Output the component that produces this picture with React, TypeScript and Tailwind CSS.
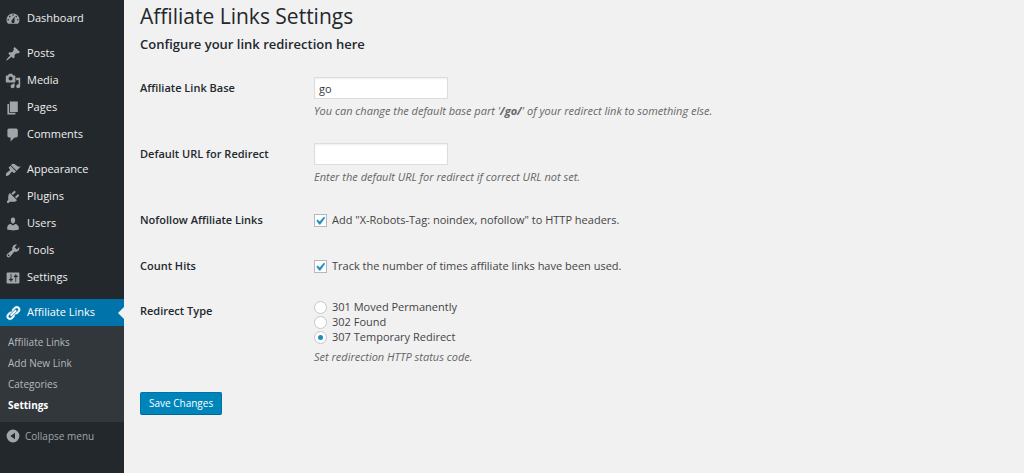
import { useState, type ReactNode } from 'react'
import clsx from 'clsx'

const icons = {
  dashboard: 'M3.76 16h12.48A7.998 7.998 0 0 0 10 3a7.998 7.998 0 0 0-6.24 13zM10 4c.55 0 1 .45 1 1s-.45 1-1 1-1-.45-1-1 .45-1 1-1zM6 6c.55 0 1 .45 1 1s-.45 1-1 1-1-.45-1-1 .45-1 1-1zm8 0c.55 0 1 .45 1 1s-.45 1-1 1-1-.45-1-1 .45-1 1-1zm-5.37 5.55L12 7v6c0 1.1-.9 2-2 2s-2-.9-2-2c0-.57.24-1.08.63-1.45zM4 10c.55 0 1 .45 1 1s-.45 1-1 1-1-.45-1-1 .45-1 1-1zm12 0c.55 0 1 .45 1 1s-.45 1-1 1-1-.45-1-1 .45-1 1-1z',
  post: 'M10.44 3.02l1.82-1.82 6.36 6.35-1.83 1.82c-1.05-.68-2.48-.57-3.41.36l-.75.75c-.92.93-1.04 2.35-.35 3.41l-1.83 1.82-2.41-2.41-2.8 2.79c-.42.42-3.38 2.71-3.8 2.29s1.86-3.39 2.28-3.81l2.79-2.79L4.1 9.36l1.83-1.82c1.05.69 2.48.57 3.4-.36l.75-.75c.93-.92 1.05-2.35.36-3.41z',
  media: 'M13 11V4c0-.55-.45-1-1-1h-1.67L9 1H5L3.67 3H2c-.55 0-1 .45-1 1v7c0 .55.45 1 1 1h10c.55 0 1-.45 1-1zM7 4.5c1.38 0 2.5 1.12 2.5 2.5S8.38 9.5 7 9.5 4.5 8.38 4.5 7 5.62 4.5 7 4.5zM14 6h5v10.5c0 1.38-1.12 2.5-2.5 2.5S14 17.88 14 16.5s1.12-2.5 2.5-2.5c.17 0 .34.02.5.05V9h-3V6zm-4 8.05V13h2v3.5c0 1.38-1.12 2.5-2.5 2.5S7 17.88 7 16.5 8.12 14 9.5 14c.17 0 .34.02.5.05z',
  page: 'M6 15V2h10v13H6zm-1 1h8v2H3V5h2v11z',
  comments: 'M5 2h9c1.1 0 2 .9 2 2v7c0 1.1-.9 2-2 2h-2l-5 5v-5H5c-1.1 0-2-.9-2-2V4c0-1.1.9-2 2-2z',
  appearance: 'M14.48 11.06L7.41 3.99l1.5-1.5c.5-.56 2.3-.47 3.51.32 1.21.8 1.43 1.28 2.91 2.1 1.18.64 2.45 1.26 4.45.85zm-.71.71L6.7 4.7 4.93 6.47c-.39.39-.39 1.02 0 1.41l1.06 1.06c.39.39.39 1.03 0 1.42-.6.6-1.43 1.11-2.21 1.69-.35.26-.7.53-1.01.84C1.43 14.23.4 16.08 1.4 17.07c.99 1 2.84-.03 4.18-1.36.31-.31.58-.66.85-1.02.57-.78 1.08-1.61 1.69-2.21.39-.39 1.02-.39 1.41 0l1.06 1.06c.39.39 1.02.39 1.41 0z',
  plugins: 'M13.11 4.36L9.87 7.6 8 5.73l3.24-3.24c.35-.34 1.05-.2 1.56.32.52.51.66 1.21.31 1.55zm-8 1.77l.91-1.12 9.01 9.01-1.19.84c-.71.71-2.63 1.16-3.82 1.16H6.14L4.9 17.26c-.59.59-1.54.59-2.12 0-.59-.58-.59-1.53 0-2.12l1.24-1.24v-3.88c0-1.13.4-3.19 1.09-3.89zm7.26 3.97l3.24-3.24c.34-.35 1.04-.21 1.55.31.52.51.66 1.21.31 1.55l-3.24 3.25z',
  users: 'M10 9.25c-2.27 0-2.73-3.44-2.73-3.44C7 4.02 7.82 2 9.97 2c2.16 0 2.98 2.02 2.71 3.81 0 0-.41 3.44-2.68 3.44zm0 2.57L12.72 10c2.39 0 4.52 2.33 4.52 4.53v2.49s-3.65 1.13-7.24 1.13c-3.65 0-7.24-1.13-7.24-1.13v-2.49c0-2.25 1.94-4.48 4.47-4.48z',
  tools: 'M16.68 9.77c-1.34 1.34-3.3 1.67-4.95.99l-5.41 6.52c-.99.99-2.59.99-3.58 0s-.99-2.59 0-3.57l6.52-5.42c-.68-1.65-.35-3.61.99-4.95 1.28-1.28 3.12-1.62 4.72-1.06l-2.89 2.89 2.82 2.82 2.86-2.87c.53 1.58.18 3.39-1.08 4.65zM3.81 16.21c.4.39 1.04.39 1.43 0 .4-.4.4-1.04 0-1.43-.39-.4-1.03-.4-1.43 0-.39.39-.39 1.03 0 1.43z',
  settings: 'M18 16V4c0-.55-.45-1-1-1H3c-.55 0-1 .45-1 1v12c0 .55.45 1 1 1h14c.55 0 1-.45 1-1zM8 11h1c.55 0 1 .45 1 1s-.45 1-1 1H8v1.5c0 .28-.22.5-.5.5s-.5-.22-.5-.5V13H6c-.55 0-1-.45-1-1s.45-1 1-1h1V5.5c0-.28.22-.5.5-.5s.5.22.5.5V11zm5-2h-1c-.55 0-1-.45-1-1s.45-1 1-1h1V5.5c0-.28.22-.5.5-.5s.5.22.5.5V7h1c.55 0 1 .45 1 1s-.45 1-1 1h-1v5.5c0 .28-.22.5-.5.5s-.5-.22-.5-.5V9z',
  links: 'M17.74 2.76c1.68 1.69 1.68 4.41 0 6.1l-1.53 1.52c-1.12 1.12-2.7 1.47-4.14 1.09l2.62-2.61.76-.77.76-.76c.84-.84.84-2.2 0-3.04-.84-.85-2.2-.85-3.04 0l-.77.76-3.38 3.38c-.37-1.44-.02-3.02 1.1-4.14l1.52-1.53c1.69-1.68 4.42-1.68 6.1 0zM8.59 13.43l5.34-5.34c.42-.42.42-1.1 0-1.52-.44-.43-1.13-.39-1.53 0l-5.33 5.34c-.42.42-.42 1.1 0 1.52.44.43 1.13.39 1.52 0zm-.76 2.29l4.14-4.15c.38 1.44.03 3.02-1.09 4.14l-1.52 1.53c-1.69 1.68-4.41 1.68-6.1 0-1.68-1.68-1.68-4.42 0-6.1l1.53-1.52c1.12-1.12 2.7-1.47 4.14-1.1l-4.14 4.15c-.85.84-.85 2.2 0 3.05.84.84 2.2.84 3.04 0z',
  collapse: 'M10 2a8 8 0 1 0 0 16 8 8 0 0 0 0-16zM12.5 5.8v8.4L6.6 10z',
  check: 'M14.83 4.89l1.34.94-5.81 8.38H9.02L5.78 9.67l1.34-1.25 2.57 2.4z',
}

type IconName = keyof typeof icons

const menuGroups: { label: string; icon: IconName }[][] = [
  [{ label: 'Dashboard', icon: 'dashboard' }],
  [
    { label: 'Posts', icon: 'post' },
    { label: 'Media', icon: 'media' },
    { label: 'Pages', icon: 'page' },
    { label: 'Comments', icon: 'comments' },
  ],
  [
    { label: 'Appearance', icon: 'appearance' },
    { label: 'Plugins', icon: 'plugins' },
    { label: 'Users', icon: 'users' },
    { label: 'Tools', icon: 'tools' },
    { label: 'Settings', icon: 'settings' },
  ],
]

const submenu = ['Affiliate Links', 'Add New Link', 'Categories', 'Settings']

const redirectTypes = [
  { value: '301', label: '301 Moved Permanently' },
  { value: '302', label: '302 Found' },
  { value: '307', label: '307 Temporary Redirect' },
]

function Icon({ name, className }: { name: IconName; className?: string }) {
  return (
    <svg viewBox="0 0 20 20" className={clsx('size-4 shrink-0', className)} fill="currentColor" strokeWidth={0.5} aria-hidden="true">
      <path d={icons[name]} />
    </svg>
  )
}

function Sidebar() {
  return (
    <nav className="w-[124px] shrink-0 bg-[#23282d] pt-[5px] text-[11px] text-[#eee]">
      {menuGroups.map((group, i) => (
        <ul key={i} className="mb-2">
          {group.map(item => (
            <li key={item.label}>
              <a href="#" className="flex h-[27px] items-center gap-1.5 pl-[5px] hover:text-[#00b9eb]">
                <Icon name={item.icon} className="text-[#a0a5aa]" />
                {item.label}
              </a>
            </li>
          ))}
        </ul>
      ))}

      <a href="#" className="relative flex h-[27px] items-center gap-1.5 bg-[#0073aa] pl-[5px] text-white">
        <Icon name="links" className="stroke-current" />
        Affiliate Links
        {/* notch pointing at the content */}
        <span className="absolute right-0 top-1/2 -translate-y-1/2 border-y-6 border-r-6 border-y-transparent border-r-[#f1f1f1]" />
      </a>
      <ul className="bg-[#32373c] py-1.5">
        {submenu.map(label => (
          <li key={label}>
            <a
              href="#"
              className={clsx(
                'flex h-[21px] items-center pl-2 text-[10px]',
                label === 'Settings' ? 'font-bold text-white' : 'text-[#b4b9be]',
              )}
            >
              {label}
            </a>
          </li>
        ))}
      </ul>

      <button type="button" className="flex h-7 w-full items-center gap-1 pl-[5px] text-[10px] text-[#a0a5aa]">
        <Icon name="collapse" />
        Collapse menu
      </button>
    </nav>
  )
}

function Row({ label, htmlFor, children, className }: { label: string; htmlFor: string; children: ReactNode; className?: string }) {
  return (
    <div className={clsx('grid grid-cols-[174px_1fr]', className)}>
      <label htmlFor={htmlFor} className="pt-[3px] font-semibold leading-4 text-[#23282d]">
        {label}
      </label>
      <div>{children}</div>
    </div>
  )
}

function Hint({ children }: { children: ReactNode }) {
  return <p className="mt-1 italic leading-4 text-[#666]">{children}</p>
}

const inputClass =
  'block h-[22px] w-[134px] border border-[#ddd] bg-white px-1 text-[11px] text-[#32373c] shadow-[inset_0_1px_2px_rgba(0,0,0,0.07)] outline-none focus:border-[#5b9dd9]'

function Checkbox({ id, label }: { id: string; label: string }) {
  const [checked, setChecked] = useState(true)
  return (
    <label className="flex items-center gap-[5px] pt-[3px] leading-4">
      <span className="relative size-[13px]">
        <input
          id={id}
          type="checkbox"
          checked={checked}
          onChange={e => setChecked(e.target.checked)}
          className="block size-[13px] appearance-none border border-[#b4b9be] bg-white"
        />
        {checked && (
          <Icon name="check" className="pointer-events-none absolute -left-0.5 -top-px stroke-current text-[#1e8cbe]" />
        )}
      </span>
      {label}
    </label>
  )
}

export default function App() {
  const [base, setBase] = useState('go')
  const [url, setUrl] = useState('')
  const [type, setType] = useState('307')

  return (
    <div className="flex min-h-screen bg-[#f1f1f1] font-['Open_Sans',sans-serif] text-[11px] text-[#444]">
      <Sidebar />
      <main className="min-w-0 flex-1 px-4 pt-1">
        <h1 className="text-[21px] leading-6 text-[#23282d]">Affiliate Links Settings</h1>
        <h2 className="mt-2 text-[13px] font-semibold leading-4 text-[#23282d]">Configure your link redirection here</h2>

        <form className="mt-[25px]" onSubmit={e => e.preventDefault()}>
          <Row label="Affiliate Link Base" htmlFor="base" className="mb-6">
            <input id="base" type="text" value={base} onChange={e => setBase(e.target.value)} className={inputClass} />
            <Hint>
              You can change the default base part '<b className="font-bold">/go/</b>' of your redirect link to something else.
            </Hint>
          </Row>
          <Row label="Default URL for Redirect" htmlFor="url" className="mb-6">
            <input id="url" type="text" value={url} onChange={e => setUrl(e.target.value)} className={inputClass} />
            <Hint>Enter the default URL for redirect if correct URL not set.</Hint>
          </Row>
          <Row label="Nofollow Affiliate Links" htmlFor="nofollow" className="mb-[27px]">
            <Checkbox id="nofollow" label={'Add "X-Robots-Tag: noindex, nofollow" to HTTP headers.'} />
          </Row>
          <Row label="Count Hits" htmlFor="hits" className="mb-[26px]">
            <Checkbox id="hits" label="Track the number of times affiliate links have been used." />
          </Row>
          <Row label="Redirect Type" htmlFor="redirect-301">
            {redirectTypes.map(t => (
              <label key={t.value} className="flex h-[15px] w-fit items-center gap-[5px]">
                <input
                  id={`redirect-${t.value}`}
                  type="radio"
                  name="redirect"
                  value={t.value}
                  checked={type === t.value}
                  onChange={() => setType(t.value)}
                  className="flex size-[13px] appearance-none items-center justify-center rounded-full border border-[#c3c7cb] bg-white before:size-[5px] before:rounded-full checked:before:bg-[#1e8cbe]"
                />
                {t.label}
              </label>
            ))}
            <Hint>Set redirection HTTP status code.</Hint>
          </Row>

          <button
            type="submit"
            className="mt-[27px] h-[23px] rounded-[2px] border border-[#0073aa] border-b-[#006799] bg-[#0085ba] px-2 text-[10px] text-white"
          >
            Save Changes
          </button>
        </form>
      </main>
    </div>
  )
}
